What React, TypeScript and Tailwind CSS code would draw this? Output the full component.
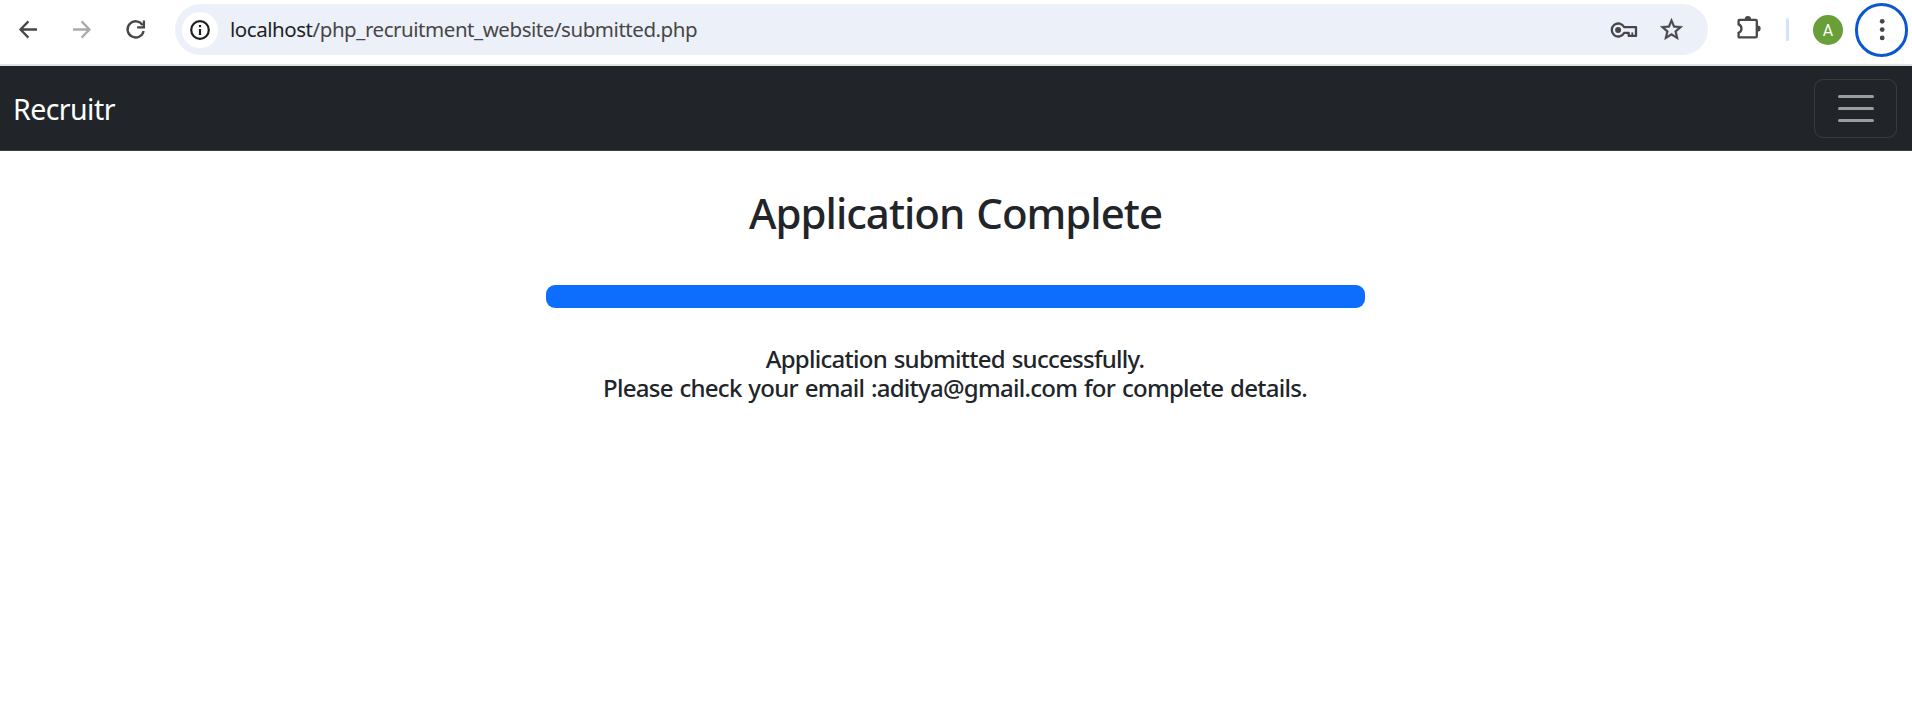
import type { ReactNode } from "react";

function NavIcon({ children, className }: { children: ReactNode; className: string }) {
  return (
    <button className={className}>
      <svg width="27" height="27" viewBox="0 0 27 27" fill="none" stroke="currentColor" strokeWidth="2.3">
        {children}
      </svg>
    </button>
  );
}

function BrowserBar() {
  return (
    <header className="flex h-[66px] shrink-0 border-b-2 border-[#e1e3e1] bg-white pt-1">
      <div className="flex h-[51px] w-full items-center text-[#474747]">
        <NavIcon className="ml-[15px]">
          <path d="M22 13.5H6M13.4 5.4 5.5 13.5l7.9 8.1" />
        </NavIcon>
        <NavIcon className="ml-[26px] text-[#ababab]">
          <path d="M5 13.5h16M13.6 5.4l7.9 8.1-7.9 8.1" />
        </NavIcon>
        <NavIcon className="ml-[27px]">
          <path d="M20.6 9.2A8.1 8.1 0 1 0 21.6 15" />
          <path d="M21.9 4.5v6.8h-6.8" />
        </NavIcon>
        <div className="ml-[26px] flex h-[51px] w-[1533px] items-center rounded-full bg-[#ecf0f9]">
          <div className="ml-[7px] flex size-9 items-center justify-center rounded-full bg-white text-[#1f1f1f]">
            <svg width="20" height="20" viewBox="0 0 20 20" fill="none" stroke="currentColor" strokeWidth="2.2">
              <circle cx="10" cy="10" r="8.8" />
              <path d="M10 9v6M10 5v2.3" />
            </svg>
          </div>
          <div className="-mt-[2px] ml-[12px] whitespace-nowrap text-[20.5px] leading-[28px] tracking-[-0.45px] text-[#474747]">
            <span className="text-[#1f1f1f]">localhost</span>
            <span>/php_recruitment_website/submitted.php</span>
          </div>
          <svg className="ml-auto" width="28" height="20" viewBox="0 0 28 20" fill="none" stroke="currentColor" strokeWidth="2.3">
            <path d="M14.1 7.1A6.5 6.5 0 1 0 14.1 12.9H18.7V15.9H26V7.1Z" strokeLinejoin="round" />
            <path d="M22.3 12.4v3" strokeWidth="1.8" />
            <circle cx="8.1" cy="10" r="3" fill="currentColor" stroke="none" />
          </svg>
          <svg className="ml-[20px] mr-[23px]" width="27" height="27" viewBox="0 0 24 24" fill="currentColor" stroke="currentColor" strokeWidth="0.35">
            <path d="m22 9.24-7.19-.62L12 2 9.19 8.63 2 9.24l5.46 4.73L5.82 21 12 17.27 18.18 21l-1.63-7.03L22 9.24zM12 15.4l-3.76 2.27 1-4.28-3.32-2.88 4.38-.38L12 6.1l1.71 4.04 4.38.38-3.32 2.88 1 4.28L12 15.4z" />
          </svg>
        </div>
        <svg className="-mt-[3px] ml-[26px]" width="28" height="28" viewBox="0 0 28 28" fill="none" stroke="currentColor" strokeWidth="2.3">
          <path d="M5.4 5.8H21.6Q22.8 5.8 22.8 7V22.2Q22.8 23.4 21.6 23.4H5.4Q4.6 23.4 4.6 22.7V18.8A4.5 4.5 0 0 0 4.6 10.4V6.5Q4.6 5.8 5.4 5.8Z" />
          <path d="M10.8 5a3.1 3.1 0 0 1 6.2 0ZM23.6 11.4a3.1 3.1 0 0 1 0 6.2Z" fill="currentColor" stroke="none" />
        </svg>
        <div className="ml-[24px] h-[23px] w-[3px] rounded-full bg-[#d3e3fd]" />
        <div className="ml-[24px] mt-px flex size-[30px] items-center justify-center rounded-full bg-[#689f38] pt-px font-[Roboto,sans-serif] text-[16px] leading-none text-white">
          A
        </div>
        <button className="ml-[12px] mt-px flex h-[54px] w-[53px] shrink-0 items-center justify-center rounded-full border-[3px] border-[#0b57d0]">
          <svg width="6" height="24" viewBox="0 0 6 24" fill="currentColor">
            <circle cx="3.2" cy="3.3" r="2.4" />
            <circle cx="3.2" cy="11.6" r="2.4" />
            <circle cx="3.2" cy="19.9" r="2.4" />
          </svg>
        </button>
      </div>
    </header>
  );
}

function Navbar() {
  return (
    <nav className="flex h-[85px] shrink-0 items-center justify-between border-b border-[#3d3f47] bg-[#212529] pl-[13px] pr-[15px]">
      <a className="pt-[2px] text-[28.5px] leading-[42px] tracking-[-0.55px] text-white">Recruitr</a>
      <button className="flex h-[59px] w-[83px] items-center justify-center rounded-[9px] border border-white/10">
        <svg width="36" height="28" viewBox="0 0 36 28" className="stroke-[#9b9d9f]" strokeWidth="3" strokeLinecap="round">
          <path d="M1.5 2.5h33M1.5 14.5h33M1.5 26.5h33" />
        </svg>
      </button>
    </nav>
  );
}

export default function App() {
  return (
    <div className="flex h-[709px] w-[1912px] flex-col overflow-hidden bg-white font-['Noto_Sans',sans-serif] text-[#212529]">
      <BrowserBar />
      <Navbar />
      <main className="flex flex-col items-center pr-px">
        <h2 className="mt-[35px] whitespace-nowrap text-[42px] font-medium leading-[54px] tracking-[-1px] [word-spacing:2px]">Application Complete</h2>
        <div className="mt-[45px] h-[23px] w-[819px] rounded-[9px] bg-[#0d6efd]" />
        <h5 className="mt-[36px] whitespace-nowrap pr-px text-center text-[24px] font-medium leading-[29px] tracking-[-0.73px] [word-spacing:1.2px]">
          <div>Application submitted successfully.</div>
          <div>Please check your email :aditya@gmail.com for complete details.</div>
        </h5>
      </main>
    </div>
  );
}
